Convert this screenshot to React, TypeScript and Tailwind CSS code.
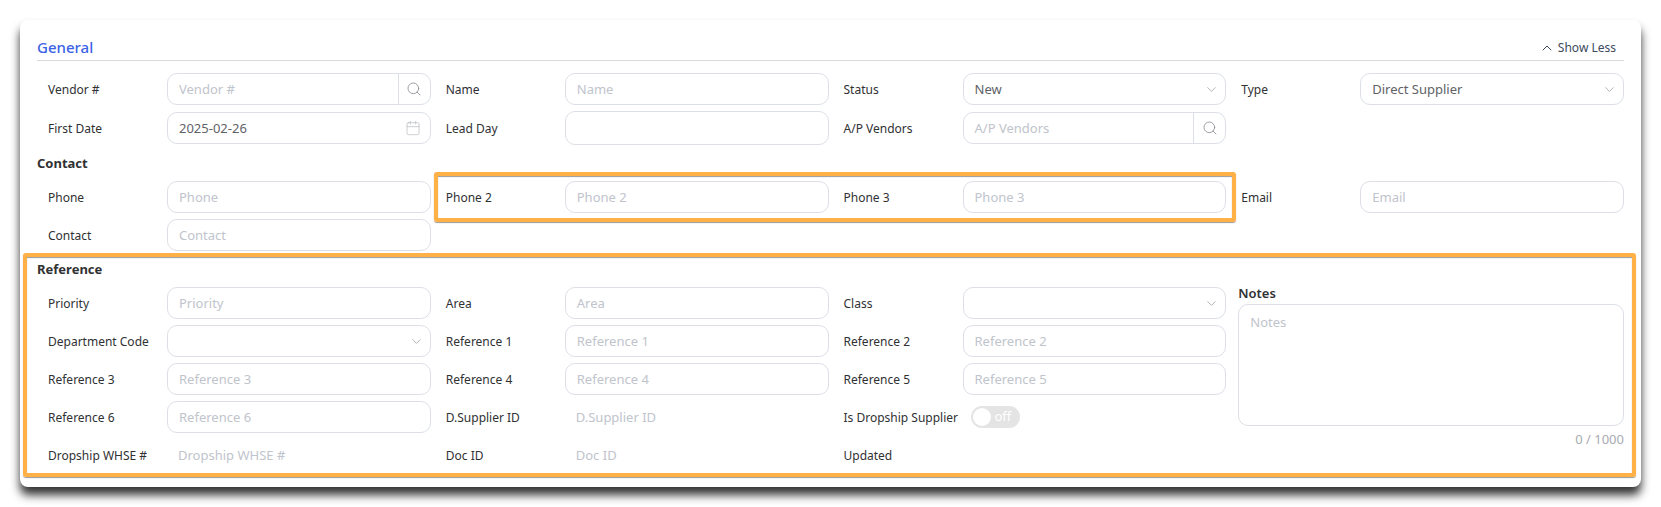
import { Calendar, ChevronDown, ChevronUp, Search } from "lucide-react";

const inputBox = "h-8 w-full rounded-[10px] border border-[#dcdfe6] bg-white";

function Label({ text }: { text: string }) {
  return <span className="w-[119px] shrink-0 pt-px text-xs text-[#303133]">{text}</span>;
}

function TextField({ label, tall }: { label: string; tall?: boolean }) {
  return (
    <div className="flex items-center">
      <Label text={label} />
      <div className={`flex items-center px-[11px] pt-px text-[13px] text-[#c0c4cc] ${inputBox} ${tall ? "h-[34px]" : ""}`}>
        {tall ? "" : label}
      </div>
    </div>
  );
}

function SearchField({ label }: { label: string }) {
  return (
    <div className="flex items-center">
      <Label text={label} />
      <div className={`flex items-center text-[13px] text-[#c0c4cc] ${inputBox}`}>
        <span className="flex-1 px-[11px] pt-px">{label}</span>
        <span className="flex h-full w-8 items-center justify-center border-l border-[#dcdfe6] text-[#8d9095]">
          <Search className="h-4 w-4" strokeWidth={1.3} />
        </span>
      </div>
    </div>
  );
}

function SelectField({ label, value }: { label: string; value?: string }) {
  return (
    <div className="flex items-center">
      <Label text={label} />
      <div className={`flex items-center justify-between pl-[11px] pr-[6px] text-[13px] text-[#606266] ${inputBox}`}>
        <span className="pt-px">{value}</span>
        <ChevronDown className="h-[15px] w-[15px] text-[#909399]" strokeWidth={1.1} />
      </div>
    </div>
  );
}

function PlainField({ label }: { label: string }) {
  return (
    <div className="flex h-8 items-center">
      <Label text={label} />
      <span className="px-[11px] pt-[2px] text-[13px] text-[#c0c4cc]">{label}</span>
    </div>
  );
}

function Heading({ children }: { children: string }) {
  return <h3 className="flex h-5 items-center pt-px text-[13px] font-bold text-[#303133]">{children}</h3>;
}

export default function App() {
  return (
    <div className="h-[507px] w-[1661px] overflow-hidden bg-white pl-5 pt-5 font-['Noto_Sans',sans-serif]">
      <div className="relative h-[467px] w-[1621px] rounded-lg bg-white px-[17px] shadow-[0_8px_10px_rgba(0,0,0,0.8)]">
        <div className="flex h-[41px] items-end justify-between border-b border-[#d9d9d9] pb-[2px]">
          <span className="text-[15px] font-medium text-[#3b63e6]">General</span>
          <span className="mr-2 flex items-center gap-[3px] pb-[2px] text-xs text-[#3c4a5c]">
            <ChevronUp className="h-4 w-4" strokeWidth={1.5} />
            Show Less
          </span>
        </div>

        <div className="mt-3 grid grid-cols-4 gap-x-[15px] gap-y-[6px] pl-[11px]">
          <SearchField label="Vendor #" />
          <TextField label="Name" />
          <SelectField label="Status" value="New" />
          <SelectField label="Type" value="Direct Supplier" />
          <div className="flex items-center">
            <Label text="First Date" />
            <div className={`flex items-center justify-between pl-[11px] pr-[9px] text-[13px] text-[#606266] ${inputBox}`}>
              <span className="pt-px">2025-02-26</span>
              <Calendar className="h-4 w-4 text-[#b4b7bd]" strokeWidth={1} />
            </div>
          </div>
          <TextField label="Lead Day" tall />
          <SearchField label="A/P Vendors" />
        </div>

        <div className="mt-2 mb-2">
          <Heading>Contact</Heading>
        </div>
        <div className="grid grid-cols-4 gap-x-[15px] gap-y-[6px] pl-[11px]">
          <TextField label="Phone" />
          <TextField label="Phone 2" />
          <TextField label="Phone 3" />
          <TextField label="Email" />
          <TextField label="Contact" />
        </div>

        <div className="mt-2 mb-2">
          <Heading>Reference</Heading>
        </div>
        <div className="grid grid-cols-4 gap-x-[15px] gap-y-[6px] pl-[11px]">
          <TextField label="Priority" />
          <TextField label="Area" />
          <SelectField label="Class" />
          <div className="row-span-5 -ml-[3px]">
            <div className="flex h-[14px] items-center text-[13px] font-semibold text-[#303133]">Notes</div>
            <div className="mt-[3px] h-[122px] rounded-[10px] border border-[#dcdfe6] px-[11px] py-2 text-[13px] text-[#c0c4cc]">
              Notes
            </div>
            <div className="mt-1 text-right text-[13px] text-[#a8abb2]">0 / 1000</div>
          </div>
          <SelectField label="Department Code" />
          <TextField label="Reference 1" />
          <TextField label="Reference 2" />
          <TextField label="Reference 3" />
          <TextField label="Reference 4" />
          <TextField label="Reference 5" />
          <TextField label="Reference 6" />
          <PlainField label="D.Supplier ID" />
          <div className="flex h-8 items-center">
            <span className="w-[127px] shrink-0 pt-px text-xs text-[#303133]">Is Dropship Supplier</span>
            <span className="flex h-[22px] w-[49px] items-center rounded-full bg-[#e4e4e4] pl-[2px]">
              <span className="h-[18px] w-[18px] rounded-full bg-white" />
              <span className="ml-1 text-[13px] text-white">off</span>
            </span>
          </div>
          <PlainField label="Dropship WHSE #" />
          <PlainField label="Doc ID" />
          <div className="flex h-8 items-center">
            <Label text="Updated" />
          </div>
        </div>

        {/* orange callouts drawn over the form */}
        <div className="absolute left-[414px] top-[152px] h-[50px] w-[802px] rounded-[3px] border-4 border-[#ffb046] shadow-[0_1px_1px_rgba(0,0,0,0.4),inset_0_1px_1px_rgba(0,0,0,0.4)]" />
        <div className="absolute left-[3px] top-[233px] h-[224px] w-[1613px] rounded-[3px] border-4 border-[#ffb046] shadow-[0_1px_1px_rgba(0,0,0,0.4),inset_0_1px_1px_rgba(0,0,0,0.4)]" />
      </div>
    </div>
  );
}
